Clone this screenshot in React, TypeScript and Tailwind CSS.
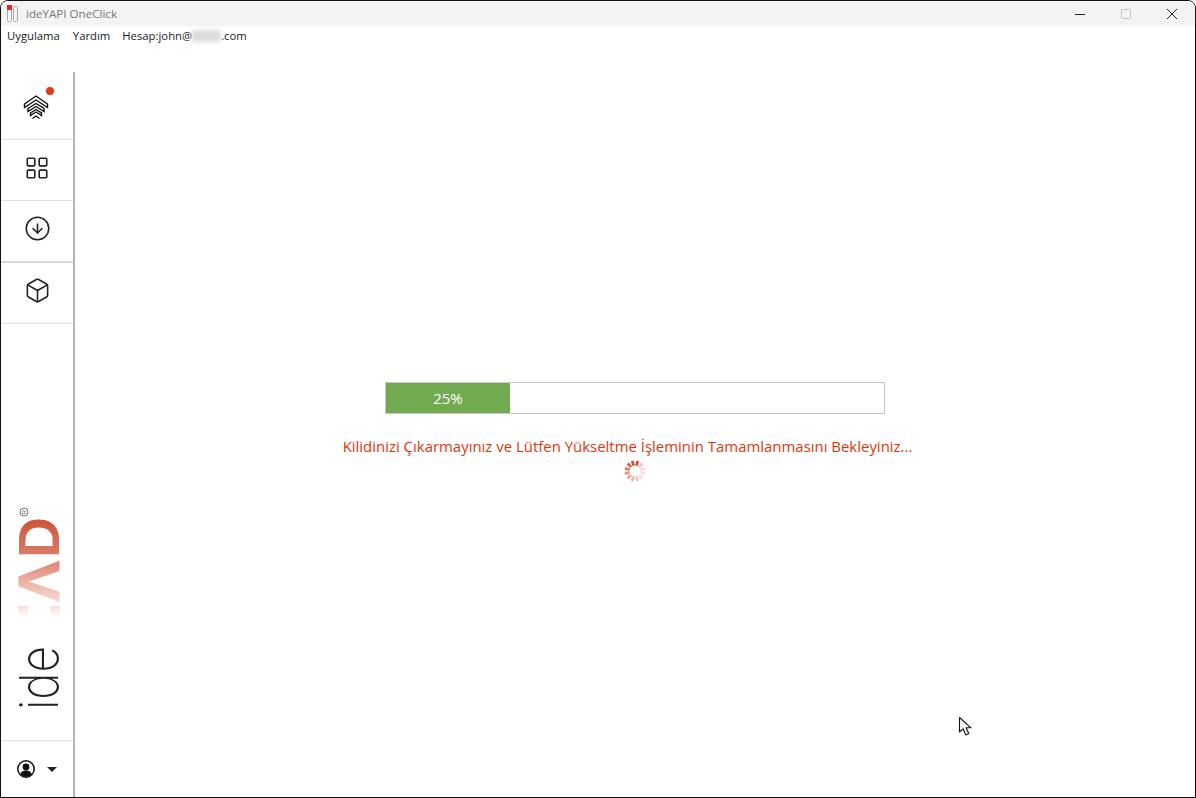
import { LayoutGrid, CircleArrowDown, Box } from 'lucide-react';

const FONT = "font-['Open_Sans','Noto_Sans',sans-serif]";

function AppIcon() {
  return (
    <svg width="14" height="18" viewBox="0 0 14 18" className="shrink-0">
      <rect x="1.5" y="1.5" width="4" height="15" rx="1" fill="#f4f4f4" stroke="#a8a8a8" />
      <rect x="7.5" y="1.5" width="4" height="15" rx="1" fill="#f4f4f4" stroke="#a8a8a8" />
      <rect x="1" y="0" width="5" height="5" fill="#e8222c" />
    </svg>
  );
}

function WindowButtons() {
  return (
    <div className="flex items-center">
      <div className="w-[46px] h-[26px] flex items-center justify-center">
        <svg width="12" height="12" viewBox="0 0 12 12">
          <path d="M1 6.5h10" stroke="#222" strokeWidth="1" />
        </svg>
      </div>
      <div className="w-[46px] h-[26px] flex items-center justify-center">
        <svg width="12" height="12" viewBox="0 0 12 12">
          <rect x="1.5" y="1.5" width="9" height="9" rx="1" fill="none" stroke="#c4c4c4" />
        </svg>
      </div>
      <div className="w-[46px] h-[26px] flex items-center justify-center">
        <svg width="12" height="12" viewBox="0 0 12 12">
          <path d="M1 1l10 10M11 1L1 11" stroke="#222" strokeWidth="1" />
        </svg>
      </div>
    </div>
  );
}

function UpgradeIcon() {
  return (
    <div className="relative w-[30px] h-[30px]">
      <svg width="26" height="25" viewBox="0 0 26 25" className="absolute top-[4px] left-[1px]">
        <path d="M1.5 9 13 1l11.5 8v3.5L13 5 1.5 12.5z" fill="#fff" stroke="#111" strokeWidth="1.4" />
        <path d="M5 13.5 13 8.5l8 5v3l-8-5-8 5z" fill="#fff" stroke="#111" strokeWidth="1.4" />
        <path d="M7.5 18 13 14.5l5.5 3.5v2.5L13 17l-5.5 3.5z" fill="#fff" stroke="#111" strokeWidth="1.4" />
        <path d="M9.5 23.5l3.5-2.5 3.5 2.5" fill="none" stroke="#111" strokeWidth="1.4" />
      </svg>
      <span className="absolute right-[-2px] top-[-4px] w-2 h-2 rounded-full bg-[#e03c12]" />
    </div>
  );
}

function Logo() {
  return (
    <svg width="72" height="208" viewBox="0 0 72 208" className="block">
      <defs>
        <linearGradient id="fadeD" gradientUnits="userSpaceOnUse" x1="40" y1="0" x2="-60" y2="0">
          <stop offset="0" stopColor="#cb5237" />
          <stop offset="0.4" stopColor="#dc7f6c" />
          <stop offset="0.55" stopColor="#e79f90" />
          <stop offset="0.8" stopColor="#f5d4cd" />
          <stop offset="1" stopColor="#ffffff" />
        </linearGradient>
        <linearGradient id="fadeA" gradientUnits="userSpaceOnUse" x1="84" y1="0" x2="-16" y2="0">
          <stop offset="0" stopColor="#cb5237" />
          <stop offset="0.4" stopColor="#dc7f6c" />
          <stop offset="0.55" stopColor="#e79f90" />
          <stop offset="0.8" stopColor="#f5d4cd" />
          <stop offset="1" stopColor="#ffffff" />
        </linearGradient>
        <linearGradient id="fadeY" x1="0" y1="0" x2="0" y2="1">
          <stop offset="0" stopColor="#f8dfd9" />
          <stop offset="1" stopColor="#ffffff" />
        </linearGradient>
      </defs>
      <circle cx="23" cy="8" r="4" fill="none" stroke="#555" strokeWidth="0.8" />
      <text x="23" y="8" transform="rotate(-90 23 8)" fontFamily="'Liberation Sans', sans-serif" fontSize="6" fill="#555" textAnchor="middle" dominantBaseline="central">R</text>
      <g transform="translate(57.5 54) rotate(-90)">
        <text x="0" y="0" fontFamily="'Liberation Sans', sans-serif" fontWeight="700" fontSize="58" textLength="41" lengthAdjust="spacingAndGlyphs" fill="url(#fadeD)">D</text>
      </g>
      <g transform="translate(57.5 98) rotate(-90)">
        <text x="0" y="0" fontFamily="'Liberation Sans', sans-serif" fontWeight="700" fontSize="58" textLength="41" lengthAdjust="spacingAndGlyphs" fill="url(#fadeA)" stroke="url(#fadeA)" strokeWidth="1">Λ</text>
      </g>
      <rect x="17" y="102" width="10" height="11" fill="url(#fadeY)" />
      <rect x="49" y="102" width="10" height="11" fill="url(#fadeY)" />
      <g transform="translate(57 206) rotate(-90)">
        <text x="0" y="0" fontFamily="'Inter', sans-serif" fontWeight="250" fontSize="54" textLength="64" lengthAdjust="spacingAndGlyphs" fill="#222">ide</text>
      </g>
    </svg>
  );
}

function UserMenu() {
  return (
    <div className="flex items-center gap-[12px] pl-[16px] h-[56px]">
      <svg width="18" height="18" viewBox="0 0 18 18">
        <circle cx="9" cy="9" r="8.2" fill="#fff" stroke="#111" strokeWidth="1.5" />
        <circle cx="9" cy="7" r="3.4" fill="#111" />
        <path d="M3 14.2c1.4-2.6 3.4-3.6 6-3.6s4.6 1 6 3.6A8 8 0 0 1 9 17a8 8 0 0 1-6-2.8z" fill="#111" />
      </svg>
      <svg width="10" height="5" viewBox="0 0 10 5">
        <path d="M0 0h10L5 5z" fill="#222" />
      </svg>
    </div>
  );
}

function Sidebar() {
  return (
    <aside className="w-[74px] shrink-0 border-r-2 border-[#b4b4b4] flex flex-col">
      <div className="h-[68px] border-b border-[#e0e0e6] flex items-center justify-center">
        <UpgradeIcon />
      </div>
      <div className="h-[61px] border-b border-[#e0e0e6] flex items-center justify-center pb-[5px]">
        <LayoutGrid size={26} strokeWidth={1.5} color="#222" />
      </div>
      <div className="h-[62px] border-b-2 border-[#d8d8d8] flex items-center justify-center pb-[5px]">
        <CircleArrowDown size={27} strokeWidth={1.4} color="#222" />
      </div>
      <div className="h-[61px] border-b border-[#e0e0e6] flex items-center justify-center pb-[5px]">
        <Box size={27} strokeWidth={1.4} color="#222" />
      </div>
      <div className="mt-auto border-b border-[#e0e0e6] pb-[28px]">
        <Logo />
      </div>
      <UserMenu />
    </aside>
  );
}

function Spinner() {
  const spokes = [1, 0.35, 0.22, 0.18, 0.2, 0.3, 0.4, 0.5, 0.6, 0.75, 0.9, 1];
  return (
    <svg width="22" height="22" viewBox="-11 -11 22 22" className="mt-[3px]">
      {spokes.map((o, i) => (
        <line
          key={i}
          x1="0"
          y1="-5.5"
          x2="0"
          y2="-10.5"
          stroke="#cc5238"
          strokeWidth="2.8"
          opacity={o}
          transform={`rotate(${i * 30 + 15})`}
        />
      ))}
    </svg>
  );
}

function Cursor() {
  return (
    <svg width="16" height="22" viewBox="0 0 16 22" className="absolute left-[957px] top-[715px]">
      <path d="M1.5 1.5v14.5l3.6-3.2 2.7 6.2 3-1.4-2.7-5.8h4.9z" fill="#fff" stroke="#111" strokeWidth="1.1" strokeLinejoin="round" />
    </svg>
  );
}

export default function App() {
  return (
    <div className={`${FONT} relative w-[1196px] h-[798px] bg-white border border-[#111] rounded-t-lg overflow-hidden flex flex-col`}>
      <header className="h-[25px] bg-[#f3f3f3] flex items-center justify-between shrink-0">
        <div className="flex items-center gap-[6px] pl-[5px]">
          <AppIcon />
          <span className="text-[11.6px] text-[#777]">ideYAPI OneClick</span>
        </div>
        <WindowButtons />
      </header>
      <nav className="h-[20px] flex items-center pl-[6px] text-[11.3px] text-[#1a1a2a] shrink-0">
        <span>Uygulama</span>
        <span className="ml-[13px]">Yardım</span>
        <span className="ml-[12px]">Hesap:john@</span>
        <span className="inline-block w-[29px] h-[12px] bg-[#dcdcdc] blur-[2px]" />
        <span>.com</span>
      </nav>
      <div className="h-[26px] shrink-0" />
      <div className="flex-1 flex min-h-0">
        <Sidebar />
        <main className="flex-1 flex flex-col items-center pt-[310px]">
          <div className="w-[500px] h-[32px] border border-[#c8c8c8] flex">
            <div className="w-[124px] bg-[#72aa50] flex items-center justify-center text-white text-[15px]">25%</div>
          </div>
          <p className="mt-[21px] pr-[15px] text-[14.95px] leading-[22px] text-[#dd370f]">
            Kilidinizi Çıkarmayınız ve Lütfen Yükseltme İşleminin Tamamlanmasını Bekleyiniz...
          </p>
          <Spinner />
        </main>
      </div>
      <Cursor />
    </div>
  );
}
